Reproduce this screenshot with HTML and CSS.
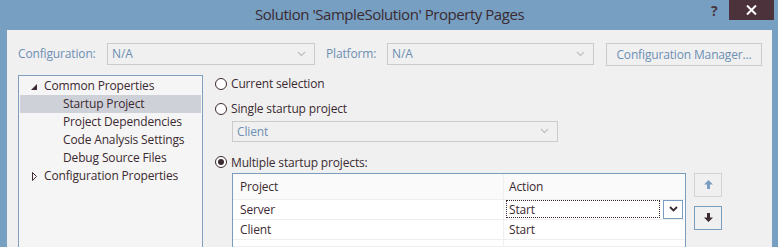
FILE: index.html
```html
<!DOCTYPE html>
<html lang="en">
<head>
    <meta charset="UTF-8">
    <title>Solution 'SampleSolution' Property Pages</title>
    <link rel="stylesheet" href="styles.css">
</head>
<body>

    <!-- Title bar -->
    <div class="titlebar">
        <span class="title">Solution 'SampleSolution' Property Pages</span>
        <span class="help">?</span>
        <span class="close">
            <svg width="11" height="10" viewBox="0 0 11 10"><path d="M1 0.5 L10 9.5 M10 0.5 L1 9.5" stroke="#fff" stroke-width="2"/></svg>
        </span>
    </div>

    <div class="content">
        <!-- Configuration row -->
        <div class="config-row">
            <span class="label label-config">Configuration:</span>
            <div class="combo combo-config">
                <span>N/A</span>
                <svg class="chev" width="9" height="6" viewBox="0 0 9 6"><path d="M1 1 L4.5 4.5 L8 1" fill="none" stroke="#c4c4c4" stroke-width="1.4"/></svg>
            </div>
            <span class="label label-platform">Platform:</span>
            <div class="combo combo-platform">
                <span>N/A</span>
                <svg class="chev" width="9" height="6" viewBox="0 0 9 6"><path d="M1 1 L4.5 4.5 L8 1" fill="none" stroke="#c4c4c4" stroke-width="1.4"/></svg>
            </div>
            <div class="btn-manager">Configuration Manager...</div>
        </div>

        <div class="main">
            <!-- Tree -->
            <div class="tree">
                <div class="node">
                    <svg class="twisty" width="6" height="6" viewBox="0 0 6 6"><path d="M6 0 L6 6 L0 6 Z" fill="#3b2a31"/></svg>
                    Common Properties
                </div>
                <div class="node child selected">Startup Project</div>
                <div class="node child">Project Dependencies</div>
                <div class="node child">Code Analysis Settings</div>
                <div class="node child">Debug Source Files</div>
                <div class="node">
                    <svg class="twisty twisty-closed" width="5" height="9" viewBox="0 0 5 9"><path d="M0.5 0.5 L4.5 4.5 L0.5 8.5 Z" fill="none" stroke="#3b2a31" stroke-width="1"/></svg>
                    Configuration Properties
                </div>
            </div>

            <!-- Startup options -->
            <div class="options">
                <label class="radio-row row-current"><span class="radio"></span>Current selection</label>
                <label class="radio-row row-single"><span class="radio"></span>Single startup project</label>
                <div class="combo combo-client">
                    <span>Client</span>
                    <svg class="chev" width="9" height="6" viewBox="0 0 9 6"><path d="M1 1 L4.5 4.5 L8 1" fill="none" stroke="#c4c4c4" stroke-width="1.4"/></svg>
                </div>
                <label class="radio-row row-multi"><span class="radio checked"></span>Multiple startup projects:</label>

                <div class="grid-area">
                    <div class="grid">
                        <div class="grid-row grid-head">
                            <div class="cell cell-project">Project</div>
                            <div class="cell cell-action">Action</div>
                        </div>
                        <div class="grid-row">
                            <div class="cell cell-project">Server</div>
                            <div class="cell cell-action editing">
                                <div class="focus">Start</div>
                                <div class="drop">
                                    <svg width="9" height="6" viewBox="0 0 9 6"><path d="M1 1 L4.5 4.5 L8 1" fill="none" stroke="#3b2a31" stroke-width="1.8"/></svg>
                                </div>
                            </div>
                        </div>
                        <div class="grid-row">
                            <div class="cell cell-project">Client</div>
                            <div class="cell cell-action">Start</div>
                        </div>
                        <div class="grid-row grid-last">
                            <div class="cell cell-project"></div>
                            <div class="cell cell-action"></div>
                        </div>
                    </div>
                    <div class="movers">
                        <div class="mover disabled">
                            <svg width="9" height="9" viewBox="0 0 9 9"><path d="M4.5 0 L9 4.5 L6 4.5 L6 9 L3 9 L3 4.5 L0 4.5 Z" fill="#7a9cc0"/></svg>
                        </div>
                        <div class="mover">
                            <svg width="9" height="9" viewBox="0 0 9 9"><path d="M4.5 9 L9 4.5 L6 4.5 L6 0 L3 0 L3 4.5 L0 4.5 Z" fill="#3b2a31"/></svg>
                        </div>
                    </div>
                </div>
            </div>
        </div>
    </div>

</body>
</html>
```

FILE: styles.css
```css
* { margin: 0; padding: 0; box-sizing: border-box; }
body {
    background: #769fc1;
    font-family: "Open Sans", "Noto Sans", sans-serif;
    font-size: 12px;
    letter-spacing: -0.15px;
    color: #3b2a31;
    height: 247px;
    overflow: hidden;
}

/* Title bar */
.titlebar {
    height: 30px;
    position: relative;
}

.title {
    position: absolute;
    left: 255px;
    top: 4px;
    font-size: 15px;
    letter-spacing: -0.45px;
    color: #3b2a31;
}

.help {
    position: absolute;
    left: 711px;
    top: 1px;
    font-size: 14px;
    font-weight: bold;
    color: #4a3540;
}

.close {
    position: absolute;
    left: 729px;
    top: 0;
    width: 45px;
    height: 20px;
    background: #4b323b;
    display: flex;
    align-items: center;
    justify-content: center;
}

/* Content */
.content {
    background: #f0f0f0;
    margin: 0 6px 0 7px;
    height: 217px;
    overflow: hidden;
}

.config-row {
    display: flex;
    align-items: center;
    padding: 12px 0 0 11px;
    height: 35px;
}

.label { color: #6d8fb3; }
.label-config { width: 89px; }
.label-platform { width: 61px; margin-left: 11px; }

.combo {
    height: 22px;
    border: 1px solid #cbcbcb;
    background: #f0f0f0;
    color: #6d8fb3;
    display: flex;
    align-items: center;
    justify-content: space-between;
    padding: 0 8px 0 4px;
}

.combo-config { width: 208px; }
.combo-platform { width: 207px; }

.btn-manager {
    margin-left: 12px;
    width: 156px;
    height: 23px;
    border: 1px solid #cbcbcb;
    color: #6d8fb3;
    display: flex;
    align-items: center;
    justify-content: center;
    margin-top: 2px;
}

.main {
    display: flex;
    margin-top: 10px;
    height: 172px;
}

/* Tree */
.tree {
    margin-left: 11px;
    width: 185px;
    height: 172px;
    border: 1px solid #829fbd;
    border-bottom: none;
    background: #f5f5f5;
    padding: 1px 1px 0 1px;
}

.node {
    height: 18px;
    line-height: 18px;
    padding-left: 24px;
    position: relative;
    white-space: nowrap;
}

.node.child { padding-left: 43px; }
.node.selected { background: #cfd1d8; }

.twisty {
    position: absolute;
    left: 11px;
    top: 7px;
}

.twisty-closed { left: 12px; top: 5px; }

/* Options column */
.options {
    margin-left: 12px;
    display: flex;
    flex-direction: column;
}

.radio-row {
    display: flex;
    align-items: center;
    height: 18px;
    white-space: nowrap;
}

.row-current { margin-top: 0; }
.row-single { margin-top: 7px; }
.row-multi { margin-top: 11px; }

.radio {
    width: 12px;
    height: 12px;
    border: 1px solid #3b2a31;
    border-radius: 50%;
    background: #fff;
    margin-right: 4px;
    position: relative;
}

.radio.checked::after {
    content: "";
    position: absolute;
    left: 2px;
    top: 2px;
    width: 6px;
    height: 6px;
    border-radius: 50%;
    background: #3b2a31;
}

.combo-client {
    margin: 3px 0 0 17px;
    width: 326px;
    height: 22px;
}

/* Project grid */
.grid-area {
    display: flex;
    margin: 2px 0 0 17px;
}

.grid {
    width: 454px;
    height: 74px;
    overflow: hidden;
    border: 1px solid #7a9cc0;
    border-bottom: none;
    background: #fff;
}

.grid-row {
    display: flex;
    height: 20px;
    border-bottom: 1px solid #efefef;
}

.grid-head {
    height: 26px;
    background: #fafafa;
}

.grid-last { height: 7px; }

.cell {
    display: flex;
    align-items: center;
    padding-left: 7px;
}

.cell-project {
    width: 271px;
    border-right: 1px solid #efefef;
}

.cell-action {
    flex: 1;
    padding-left: 5px;
}

.cell.editing { padding-left: 2px; }

.focus {
    width: 154px;
    height: 18px;
    border: 1px dotted #3b2a31;
    padding-left: 2px;
    display: flex;
    align-items: center;
}

.drop {
    margin-left: 3px;
    width: 20px;
    height: 19px;
    border: 1px solid #7a9cc0;
    display: flex;
    align-items: center;
    justify-content: center;
}

.movers {
    margin-left: 8px;
    display: flex;
    flex-direction: column;
    gap: 9px;
}

.mover {
    width: 28px;
    height: 24px;
    border: 1px solid #7a9cc0;
    display: flex;
    align-items: center;
    justify-content: center;
}

.mover.disabled { border-color: #d3d3d3; }
```
